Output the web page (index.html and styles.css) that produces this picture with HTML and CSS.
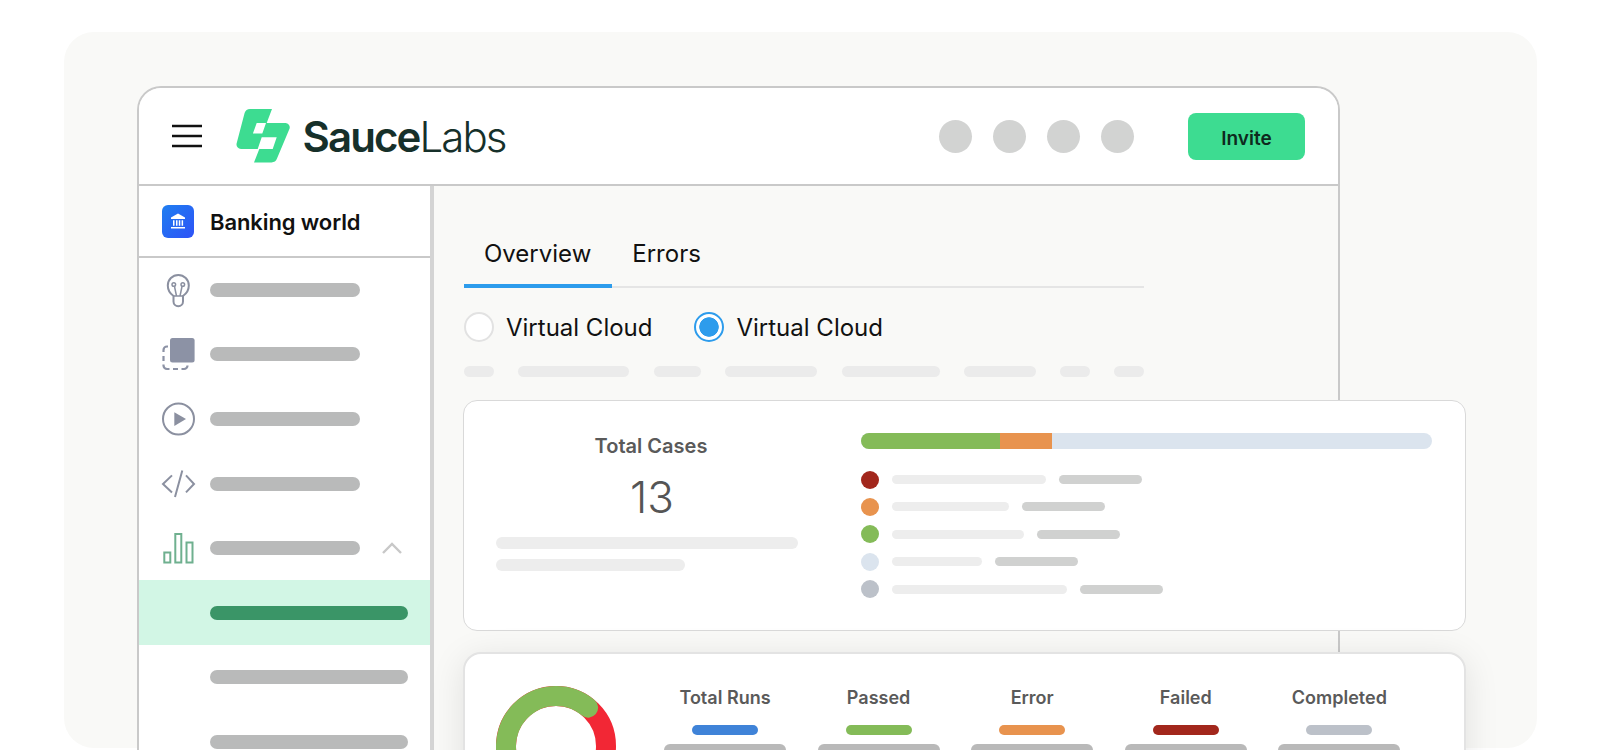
FILE: index.html
```html
<!DOCTYPE html>
<html lang="en">
<head>
<meta charset="utf-8">
<title>SauceLabs</title>
<link rel="stylesheet" href="styles.css">
</head>
<body>
<div class="stage">
  <div class="window">
    <header class="topbar">
      <svg class="burger" width="30" height="24" viewBox="0 0 30 24"><path d="M0 2h30M0 12h30M0 22h30" stroke="#111" stroke-width="2.6" stroke-linecap="round" fill="none"/></svg>
      <svg class="logo" width="54" height="54" viewBox="0 0 54 54"><path fill-rule="evenodd" fill="#3ddc91" d="M14 0H36L30.7 14H49.5A4.4 4.4 0 0 1 53.6 19.5L41 49.5A6 6 0 0 1 35.5 53.4H18L23.3 40H5A4.6 4.6 0 0 1 .6 34.5L8.6 4A6 6 0 0 1 14 0ZM20.7 14L16.9 24.6H26.3L30 14ZM25.7 28.3L21.7 40H36.7L40.7 28.3Z"/></svg>
      <div class="brand"><span class="brand-bold">Sauce</span>Labs</div>
      <div class="dots"><i class="dot"></i><i class="dot"></i><i class="dot"></i><i class="dot"></i></div>
      <button class="invite">Invite</button>
    </header>
    <div class="main">
      <aside class="sidebar">
        <div class="org">
          <span class="org-icon">
            <svg width="18" height="18" viewBox="0 0 18 18"><path fill="#fff" d="M9 1.5L16 5.5V7H2V5.5ZM2 15h14v1.6H2ZM4 8.2h1.5v5.6H4ZM7 8.2h1.5v5.6H7ZM9.8 8.2h1.5v5.6H9.8ZM12.6 8.2h1.5v5.6h-1.5Z"/></svg>
          </span>
          <span class="org-name">Banking world</span>
        </div>
        <div class="nav-row">
          <svg class="nav-icon" viewBox="0 0 36 36"><g fill="none" stroke="#8b90a0" stroke-width="2"><path d="M13.5 24C10 21.5 7.8 18 7.8 13.5A10.5 10.5 0 0 1 28.8 13.5C28.8 18 26.6 21.5 23 24V29.5A4.7 4.7 0 0 1 13.5 29.5Z"/><circle cx="13.8" cy="12.5" r="1.8" stroke-width="1.5"/><circle cx="22.8" cy="12.5" r="1.8" stroke-width="1.5"/><path d="M14.5 14.5L16.5 24M22 14.5L20 24M14 24H23" stroke-width="1.5"/></g></svg>
          <span class="bar"></span>
        </div>
        <div class="nav-row">
          <svg class="nav-icon" viewBox="0 0 36 36"><rect x="10" y="2" width="24.6" height="24.4" rx="2.5" fill="#8c92a5"/><path d="M8 10.5H7A3.5 3.5 0 0 0 3.5 14V16M3.5 20V25M3.5 28.5V29.5A3.5 3.5 0 0 0 7 33H9.5M13 33H18M21.5 33H24A3.5 3.5 0 0 0 27.5 29.5" fill="none" stroke="#8c92a5" stroke-width="2.2"/></svg>
          <span class="bar"></span>
        </div>
        <div class="nav-row">
          <svg class="nav-icon" viewBox="0 0 36 36"><circle cx="18.5" cy="18" r="15.5" fill="none" stroke="#8b90a0" stroke-width="2"/><path d="M14.3 11.3L26 18L14.3 25Z" fill="#8b90a0"/></svg>
          <span class="bar"></span>
        </div>
        <div class="nav-row">
          <svg class="nav-icon" viewBox="0 0 36 36"><path d="M12 9.4L3 18L12 26.4M22.3 4.6L15 31M26 9.4L34 18L26 26.4" fill="none" stroke="#8b90a0" stroke-width="2"/></svg>
          <span class="bar"></span>
        </div>
        <div class="nav-row">
          <svg class="nav-icon" viewBox="0 0 36 36"><g fill="none" stroke="#6fb08f" stroke-width="2"><rect x="4.3" y="22.5" width="6" height="10"/><rect x="15.3" y="4" width="6" height="28.5"/><rect x="26.5" y="12.5" width="6" height="20"/></g></svg>
          <span class="bar"></span>
          <svg class="caret" width="20" height="12" viewBox="0 0 20 12"><path d="M1 11L10 2L19 11" fill="none" stroke="#c8c8c8" stroke-width="2.4"/></svg>
        </div>
        <div class="nav-row nav-active"><span class="bar bar-long bar-green"></span></div>
        <div class="nav-row"><span class="bar bar-long"></span></div>
        <div class="nav-row"><span class="bar bar-long"></span></div>
      </aside>
      <section class="content">
        <nav class="tabs">
          <span class="tab tab-on">Overview</span>
          <span class="tab">Errors</span>
        </nav>
        <div class="radios">
          <label class="radio"><i class="knob"></i>Virtual Cloud</label>
          <label class="radio"><i class="knob knob-on"></i>Virtual Cloud</label>
        </div>
        <div class="chips">
          <i class="chip chip-a"></i><i class="chip chip-b"></i><i class="chip chip-c"></i><i class="chip chip-d"></i><i class="chip chip-e"></i><i class="chip chip-f"></i><i class="chip chip-g"></i><i class="chip chip-a"></i>
        </div>
        <article class="card card-cases">
          <div class="cases">
            <div class="cases-title">Total Cases</div>
            <div class="cases-num">13</div>
            <i class="line line-full"></i>
            <i class="line line-part"></i>
          </div>
          <div class="breakdown">
            <div class="stack"><i class="seg seg-green"></i><i class="seg seg-orange"></i></div>
            <ul class="legend">
              <li class="legend-row"><i class="ball c-red"></i><i class="lg-light" style="width:153.6px"></i><i class="lg-dark"></i></li>
              <li class="legend-row"><i class="ball c-orange"></i><i class="lg-light" style="width:117.4px"></i><i class="lg-dark"></i></li>
              <li class="legend-row"><i class="ball c-green"></i><i class="lg-light" style="width:132.4px"></i><i class="lg-dark"></i></li>
              <li class="legend-row"><i class="ball c-pale"></i><i class="lg-light" style="width:90.4px"></i><i class="lg-dark"></i></li>
              <li class="legend-row"><i class="ball c-grey"></i><i class="lg-light" style="width:175.4px"></i><i class="lg-dark"></i></li>
            </ul>
          </div>
        </article>
        <article class="card card-runs">
          <svg class="donut" width="120" height="120" viewBox="0 0 120 120">
            <circle cx="60" cy="60" r="50" fill="none" stroke="#f22735" stroke-width="20"/>
            <path d="M92.1 21.7A50 50 0 0 0 16.7 85" fill="none" stroke="#84bb58" stroke-width="20" stroke-linecap="round"/>
          </svg>
          <div class="stats">
            <div class="stat"><span class="stat-label">Total Runs</span><i class="pill c-blue"></i><i class="block"></i></div>
            <div class="stat"><span class="stat-label">Passed</span><i class="pill c-green"></i><i class="block"></i></div>
            <div class="stat"><span class="stat-label">Error</span><i class="pill c-orange"></i><i class="block"></i></div>
            <div class="stat"><span class="stat-label">Failed</span><i class="pill c-red"></i><i class="block"></i></div>
            <div class="stat"><span class="stat-label">Completed</span><i class="pill c-grey"></i><i class="block"></i></div>
          </div>
        </article>
      </section>
    </div>
  </div>
</div>
</body>
</html>
```

FILE: styles.css
```css
* { box-sizing: border-box; }
html, body { margin: 0; height: 750px; overflow: hidden; background: #fff; }
body { font-family: Inter, "Liberation Sans", sans-serif; color: #111; }
i { display: block; }

.stage {
  margin: 32px 63px 0 64px;
  height: 716px;
  padding: 54px 0 0 73px;
  background: #f9f9f7;
  border-radius: 30px;
}
.window {
  width: 1203px;
  height: 800px;
  background: #f9f9f7;
  border: 2px solid #c9c9c9;
  border-bottom: 0;
  border-radius: 24px 24px 0 0;
}

.topbar {
  display: flex;
  align-items: center;
  height: 98px;
  padding: 0 33px 0 33px;
  background: #fff;
  border-bottom: 2px solid #c9c9c9;
  border-radius: 22px 22px 0 0;
}
.burger { flex: none; margin-right: 33.5px; }
.logo { flex: none; margin-right: 13px; }
.brand {
  font-size: 42px;
  font-weight: 300;
  line-height: 50px;
  color: #16302a;
  letter-spacing: -1.9px;
  padding-top: 2px;
}
.brand-bold { font-weight: 600; }
.dots { display: flex; gap: 21px; margin: 1px 54px 0 auto; }
.dot { width: 33px; height: 33px; border-radius: 50%; background: #d2d3d2; }
.invite {
  width: 117px;
  height: 47px;
  padding: 4px 0 0;
  border: 0;
  border-radius: 8px;
  background: #3ddc91;
  color: #0e2a1e;
  font: 600 19px Inter, "Liberation Sans", sans-serif;
}

.main { display: flex; height: 700px; }
.sidebar {
  flex: none;
  width: 295px;
  background: #fff;
  border-right: 4px solid #d4d4d4;
}
.org {
  display: flex;
  align-items: center;
  gap: 16px;
  height: 71.5px;
  padding: 1px 0 0 23px;
  border-bottom: 2px solid #c9c9c9;
}
.org-icon {
  display: flex;
  align-items: center;
  justify-content: center;
  width: 32px;
  height: 33px;
  border-radius: 6px;
  background: linear-gradient(135deg, #1f7ff0, #2e52f7);
}
.org-name { padding-top: 1px; font-size: 22px; font-weight: 600; letter-spacing: -.1px; color: #111; }
.nav-row {
  display: flex;
  align-items: center;
  height: 64.6px;
  padding-left: 71px;
  position: relative;
}
.nav-icon { position: absolute; left: 21px; top: 14.3px; width: 36px; height: 36px; }
.nav-active { background: #d2f6e5; }
.bar { display: block; width: 150px; height: 14px; border-radius: 7px; background: #b9baba; }
.bar-long { width: 198px; }
.bar-green { background: #3a9567; }
.caret { margin-left: 22px; }

.content { flex: 1; min-width: 0; padding: 40px 0 0 30px; }
.tabs { display: flex; width: 680px; border-bottom: 2px solid #e5e5e5; }
.tab {
  padding: 13px 21px 15px 20px;
  margin-bottom: -2px;
  border-bottom: 4px solid transparent;
  font-size: 24px;
  line-height: 30px;
  color: #111;
}
.tab-on { border-bottom-color: #2d9cec; }
.radios { display: flex; gap: 42px; margin-top: 24px; }
.radio { display: flex; align-items: center; gap: 12px; font-size: 24px; line-height: 32px; color: #111; }
.knob { width: 30px; height: 30px; margin-top: -2px; border-radius: 50%; background: #fff; border: 2px solid #e2e2e2; }
.knob-on { border-color: #2d9cec; background: radial-gradient(circle, #2d9cec 0 9.4px, #fff 10px); }
.chips { display: flex; gap: 24.4px; margin-top: 22px; }
.chip { height: 11px; border-radius: 6px; background: #ebebeb; }
.chip-a { width: 30px; }
.chip-b { width: 111px; }
.chip-c { width: 47px; }
.chip-d { width: 92px; }
.chip-e { width: 98px; }
.chip-f { width: 72px; }
.chip-g { width: 29.6px; }

.card { width: 1003px; margin-left: -1px; background: #fff; position: relative; }
.card-cases {
  display: flex;
  gap: 63px;
  height: 231px;
  margin-top: 23px;
  padding: 32px 33px 0 32px;
  border: 1px solid #d9d9d9;
  border-radius: 14px;
}
.cases { width: 302px; text-align: center; }
.cases-title { padding-left: 8px; font-size: 20px; font-weight: 600; line-height: 26px; color: #5a5a5a; }
.cases-num { margin-top: 13px; padding-left: 10px; font-size: 44px; font-weight: 300; line-height: 50px; color: #555; }
.line { height: 12px; border-radius: 6px; background: #ededed; }
.line-full { margin-top: 15px; }
.line-part { width: 189px; margin-top: 10px; }
.breakdown { flex: 1; }
.stack { display: flex; height: 16px; border-radius: 8px; overflow: hidden; background: #dbe4ee; }
.seg-green { width: 139px; background: #84bb58; }
.seg-orange { width: 52px; background: #e8934e; }
.legend { display: flex; flex-direction: column; gap: 9.4px; margin: 21.5px 0 0; padding: 0; list-style: none; }
.legend-row { display: flex; align-items: center; gap: 13px; height: 18px; }
.ball { width: 18px; height: 18px; border-radius: 50%; }
.lg-light { height: 9px; border-radius: 5px; background: #ededed; }
.lg-dark { width: 83px; height: 9px; border-radius: 5px; background: #d0d1d0; }
.c-red { background: #a2271c; }
.c-orange { background: #e8934e; }
.c-green { background: #84bb58; }
.c-pale { background: #dbe4ee; }
.c-grey { background: #bcc1c9; }
.c-blue { background: #3f83d8; }

.card-runs {
  display: flex;
  gap: 48px;
  height: 240px;
  margin-top: 21px;
  padding: 32px 0 0 31px;
  border: 2px solid #e3e3e3;
  border-radius: 18px;
  box-shadow: 0 6px 34px rgba(0, 0, 0, .1);
}
.donut { flex: none; }
.stats { display: flex; gap: 31.6px; }
.stat { display: flex; flex-direction: column; align-items: center; width: 122px; }
.stat-label { font-size: 18px; font-weight: 600; line-height: 24px; color: #5a5a5a; }
.pill { width: 66px; height: 10px; margin-top: 15px; border-radius: 5px; }
.block { width: 122px; height: 30px; margin-top: 9px; border-radius: 6px; background: #b9b9b9; }
```
